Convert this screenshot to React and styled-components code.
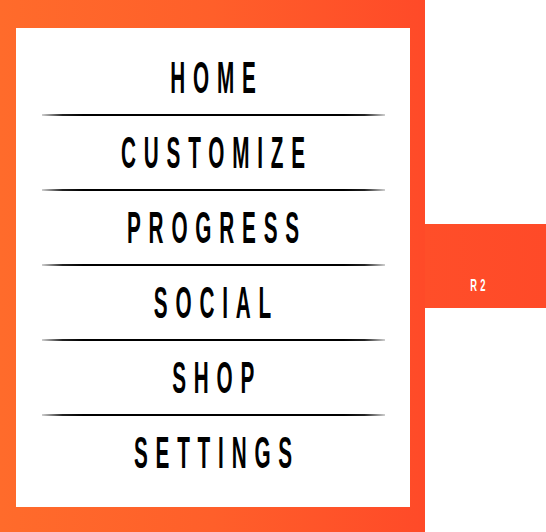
import React from "react";
import styled, { createGlobalStyle } from "styled-components";

const Global = createGlobalStyle`
	html, body {
		margin: 0;
		padding: 0;
		background: #ffffff;
	}
	body {
		font-family: "Liberation Sans", Arial, sans-serif;
	}
`;

const Page = styled.div`
	display: flex;
	align-items: center;
	width: 546px;
	height: 532px;
	overflow: hidden;
`;

const Panel = styled.div`
	width: 425px;
	height: 532px;
	box-sizing: border-box;
	padding: 28px 15px 25px 16px;
	background: linear-gradient(to right, #ff6b2b 0%, #ff5f2a 50%, #ff4a28 100%);
`;

const Menu = styled.ul`
	list-style: none;
	margin: 0;
	height: 100%;
	box-sizing: border-box;
	padding: 13px 0 0;
	background: #ffffff;
`;

const Item = styled.li`
	display: flex;
	flex-direction: column;
	align-items: center;
`;

const Label = styled.div`
	height: 73px;
	display: flex;
	align-items: center;
	justify-content: center;
	width: 100%;
`;

const Word = styled.span`
	display: inline-block;
	font-family: "Liberation Sans", Arial, sans-serif;
	font-weight: 700;
	font-size: 45px;
	line-height: 1;
	color: #000;
	letter-spacing: 17px;
	padding-left: 17px;
	transform: scaleX(0.46);
	white-space: nowrap;
`;

const Rule = styled.div`
	width: 343px;
	height: 2px;
	background: linear-gradient(
		to right,
		#d0d0d0 0%,
		#222 6%,
		#000 12%,
		#000 88%,
		#222 94%,
		#d0d0d0 100%
	);
`;

const Tab = styled.div`
	width: 121px;
	height: 84px;
	box-sizing: border-box;
	background: linear-gradient(to right, #ff4e29, #ff4a28);
	display: flex;
	align-items: flex-end;
	justify-content: center;
	padding: 0 15px 14px 0;
`;

const TabText = styled.span`
	display: inline-block;
	font-family: "Liberation Sans", Arial, sans-serif;
	font-weight: 700;
	font-size: 17px;
	line-height: 1;
	color: #fff;
	letter-spacing: 6px;
	padding-left: 6px;
	transform: scaleX(0.55);
`;

const items = ["HOME", "CUSTOMIZE", "PROGRESS", "SOCIAL", "SHOP", "SETTINGS"];

export default function App() {
	return (
		<Page>
			<Global />
			<Panel>
				<Menu>
					{items.map((name, i) => (
						<Item key={name}>
							<Label>
								<Word>{name}</Word>
							</Label>
							{i < items.length - 1 && <Rule />}
						</Item>
					))}
				</Menu>
			</Panel>
			<Tab>
				<TabText>R2</TabText>
			</Tab>
		</Page>
	);
}
